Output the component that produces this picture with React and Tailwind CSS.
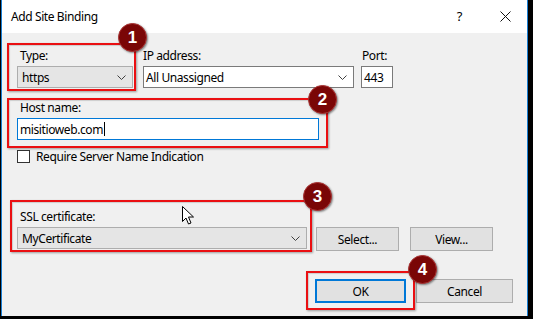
import React from "react";

const Chevron = () => (
  <svg width="9" height="5" viewBox="0 0 9 5" className="shrink-0">
    <path d="M0.5 0.5 L4.5 4.5 L8.5 0.5" fill="none" stroke="#404040" strokeWidth="1" />
  </svg>
);

const Badge = ({ n, className }) => (
  <div
    className={`absolute w-[29px] h-[29px] rounded-full bg-[#7a0606] border border-[#a33] shadow-[1px_1px_2px_rgba(0,0,0,0.45)] flex items-center justify-center text-white font-bold text-[17px] leading-none tracking-normal ${className}`}
    style={{ fontFamily: '"Liberation Sans", Arial, sans-serif' }}
  >
    {n}
  </div>
);

const RedBox = ({ className }) => (
  <div
    className={`absolute border-2 border-[#ea0f12] shadow-[1px_1px_2px_rgba(0,0,0,0.35),inset_1px_1px_1px_rgba(0,0,0,0.15)] ${className}`}
  />
);

export default function App() {
  return (
    <div
      className="relative w-[533px] h-[319px] bg-black flex flex-col pl-px pr-[5px] pb-[3px] overflow-hidden text-[12px] leading-[15px] tracking-[-0.4px] text-black"
      style={{ fontFamily: '"Noto Sans", "Open Sans", sans-serif' }}
    >
      <div className="flex-1 flex flex-col border-x border-[#1a7fd4] bg-[#f0f0f0]">
        {/* Title bar */}
        <div className="h-[33px] bg-white flex items-center pl-[9px] pr-[16px] shrink-0">
          <span className="flex-1">Add Site Binding</span>
          <span className="text-[13px] mr-[38px]">?</span>
          <svg width="11" height="11" viewBox="0 0 11 11">
            <path d="M0.5 0.5 L10.5 10.5 M10.5 0.5 L0.5 10.5" stroke="#111" strokeWidth="1" />
          </svg>
        </div>

        {/* Body */}
        <div className="flex-1 flex flex-col pl-[15px] pr-[14px] pt-[15px]">
          {/* Row 1 */}
          <div className="flex">
            <div className="flex flex-col w-[116px] gap-[3px]">
              <span className="pl-[3px]">Type:</span>
              <div className="h-[22px] bg-[#e5e5e5] border border-[#adadad] flex items-center pl-[4px] pr-[6px]">
                <span className="flex-1">https</span>
                <Chevron />
              </div>
            </div>
            <div className="flex flex-col w-[211px] gap-[3px] ml-[10px]">
              <span>IP address:</span>
              <div className="h-[22px] bg-white border border-[#7a7a7a] flex items-center pl-[2px] pr-[6px]">
                <span className="flex-1">All Unassigned</span>
                <Chevron />
              </div>
            </div>
            <div className="flex flex-col w-[32px] gap-[3px] ml-[7px]">
              <span className="pl-px">Port:</span>
              <div className="h-[22px] bg-white border border-[#7a7a7a] flex items-center pl-[2px]">
                443
              </div>
            </div>
          </div>

          {/* Host name */}
          <div className="flex flex-col w-[302px] gap-[3px] mt-[12px]">
            <span className="pl-[3px]">Host name:</span>
            <div className="h-[22px] bg-white border border-[#0078d7] flex items-center pl-[2px]">
              <span>misitioweb.com</span>
              <span className="w-px h-[14px] bg-black ml-px" />
            </div>
          </div>

          {/* Checkbox */}
          <div className="flex items-center mt-[10px] h-[13px]">
            <div className="w-[13px] h-[13px] bg-white border border-[#333]" />
            <span className="ml-[6px]">Require Server Name Indication</span>
          </div>

          {/* SSL */}
          <div className="flex items-end mt-[46px]">
            <div className="flex flex-col w-[290px] gap-[3px]">
              <span className="pl-[3px]">SSL certificate:</span>
              <div className="h-[22px] bg-[#e5e5e5] border border-[#adadad] flex items-center pl-[4px] pr-[6px]">
                <span className="flex-1">MyCertificate</span>
                <Chevron />
              </div>
            </div>
            <button className="w-[83px] h-[24px] ml-[9px] -mb-[2px] bg-[#e1e1e1] border border-[#adadad]">
              Select...
            </button>
            <button className="w-[83px] h-[24px] ml-[11px] -mb-[2px] bg-[#e1e1e1] border border-[#adadad]">
              View...
            </button>
          </div>

          {/* Bottom buttons */}
          <div className="flex justify-end mt-[30px]">
            <button className="w-[91px] h-[24px] bg-[#e1e1e1] border-2 border-[#0078d7]">OK</button>
            <button className="w-[97px] h-[24px] ml-[10px] bg-[#e1e1e1] border border-[#adadad]">Cancel</button>
          </div>
        </div>
      </div>

      {/* Annotations */}
      <RedBox className="left-[7px] top-[43px] w-[129px] h-[48px]" />
      <RedBox className="left-[7px] top-[98px] w-[321px] h-[50px]" />
      <RedBox className="left-[10px] top-[200px] w-[302px] h-[52px]" />
      <RedBox className="left-[306px] top-[271px] w-[109px] h-[39px]" />

      <Badge n="1" className="left-[118px] top-[23px]" />
      <Badge n="2" className="left-[308px] top-[85px]" />
      <Badge n="3" className="left-[303px] top-[182px]" />
      <Badge n="4" className="left-[408px] top-[255px]" />

      {/* Cursor */}
      <svg className="absolute left-[182px] top-[206px]" width="13" height="20" viewBox="0 0 13 20">
        <path
          d="M0.5 0.5 L0.5 15.5 L4 12 L6.5 18 L9 17 L6.5 11 L11.5 11 Z"
          fill="white"
          stroke="black"
          strokeWidth="1"
          strokeLinejoin="round"
        />
      </svg>
    </div>
  );
}
